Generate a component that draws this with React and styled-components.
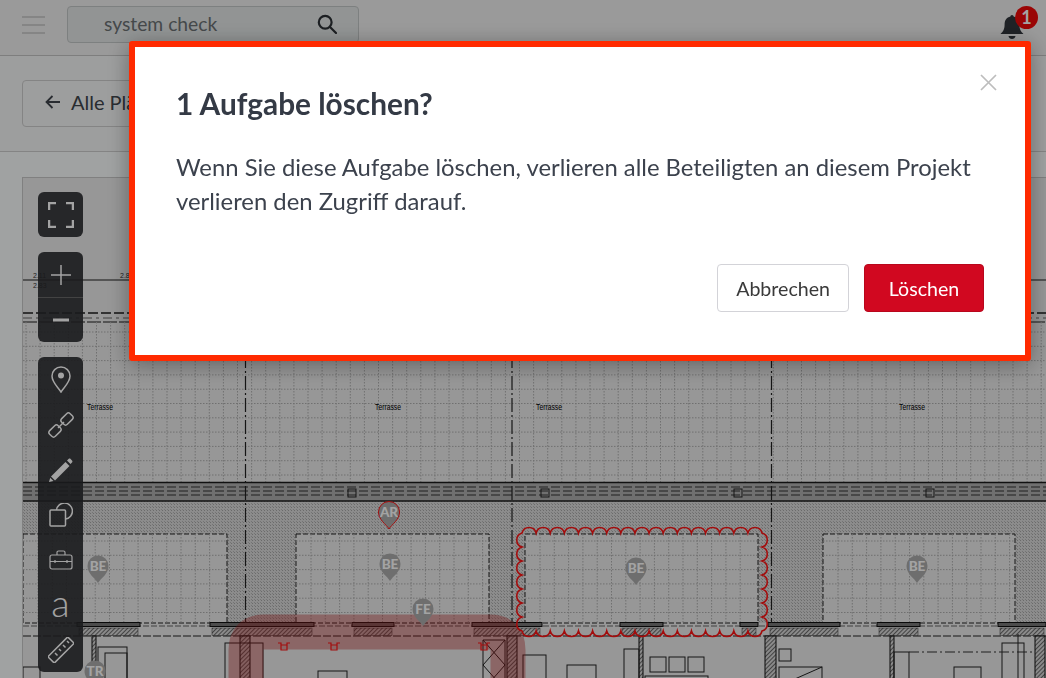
import React from 'react'
import styled, { createGlobalStyle } from 'styled-components'

const GlobalStyle = createGlobalStyle`
  html, body {
    margin: 0;
    padding: 0;
    height: 100%;
    overflow: hidden;
    font-family: 'Lato', 'Noto Sans', sans-serif;
  }

  * {
    box-sizing: border-box;
  }
`

const Page = styled.div`
  display: flex;
  flex-direction: column;
  height: 100vh;
  overflow: hidden;
  background-color: #fafdfd;
`

const Header = styled.header`
  display: flex;
  align-items: center;
  flex: 0 0 56px;
  padding: 0 20px 6px 22px;
  background-color: #f1f1f1;
  border-bottom: 1px solid #c6c6c6;
`

const Burger = styled.div`
  display: flex;
  flex-direction: column;
  justify-content: space-between;
  width: 23px;
  height: 18px;
  margin-right: 22px;

  span {
    display: block;
    height: 2px;
    background-color: #d0d0d0;
  }
`

const SearchBox = styled.div`
  display: flex;
  align-items: center;
  justify-content: space-between;
  width: 292px;
  height: 37px;
  padding: 0 21px 2px 36px;
  background-color: #e4e8e8;
  border: 1px solid #c4c8c8;
  border-radius: 4px;
  color: #6d7275;
  font-size: 19.3px;
`

const Bell = styled.div`
  position: relative;
  display: flex;
  width: 26px;
  height: 28px;
  margin: 6px 0 0 auto;
`

const Badge = styled.span`
  position: absolute;
  top: -8px;
  left: 15px;
  display: flex;
  align-items: center;
  justify-content: center;
  width: 23px;
  height: 23px;
  border-radius: 50%;
  background-color: #f10808;
  color: #ffffff;
  font-size: 18px;
  font-weight: 700;
`

const SubBar = styled.div`
  display: flex;
  align-items: center;
  flex: 0 0 96px;
  padding: 0 22px 1px;
  background-color: #f6f7f7;
  border-bottom: 1px solid #cfcfcf;
`

const BackButton = styled.div`
  display: flex;
  align-items: center;
  gap: 10px;
  height: 47px;
  padding: 0 22px 2px;
  border: 1px solid #cfcfcf;
  border-radius: 4px;
  color: #40464d;
  font-size: 20px;
`

const PlanArea = styled.main`
  display: flex;
  flex: 1;
  min-height: 0;
  padding: 25px 0 0 22px;
`

const PlanFrame = styled.div`
  position: relative;
  flex: 1;
  overflow: hidden;
  background-color: #ececec;
  border-top: 1px solid #c8c8c8;
  border-left: 1px solid #c8c8c8;

  > svg {
    display: block;
  }
`

const ToolColumn = styled.div`
  position: absolute;
  top: 14px;
  left: 15px;
  display: flex;
  flex-direction: column;
  gap: 15px;
`

const ToolGroup = styled.div`
  display: flex;
  flex-direction: column;
  width: 45px;
  overflow: hidden;
  border-radius: 6px;
  background-color: rgba(41, 42, 46, 0.9);
`

const Tool = styled.div`
  display: flex;
  align-items: center;
  justify-content: center;
  height: 45px;
  color: #ffffff;
  border-top: ${props => (props.$divided ? '1px solid #6a6a6a' : '0')};
`

const LetterTool = styled(Tool)`
  font-size: 38px;
  font-weight: 300;
  line-height: 1;
  padding-bottom: 6px;
`

const Backdrop = styled.div`
  position: fixed;
  inset: 0;
  display: flex;
  align-items: flex-start;
  padding: 41px 15px 0 129px;
  background-color: rgba(0, 0, 0, 0.36);
`

const Dialog = styled.div`
  position: relative;
  display: flex;
  flex-direction: column;
  width: 902px;
  height: 320px;
  padding: 40px 41px 0 41px;
  background-color: #ffffff;
  border: 6px solid #ff2a00;
  border-radius: 3px;
  box-shadow: 0 4px 22px rgba(0, 0, 0, 0.35);
`

const CloseButton = styled.div`
  position: absolute;
  top: 27px;
  right: 28px;
  display: flex;
  color: #bdbdbd;
`

const Title = styled.h2`
  margin: 0 0 29px;
  color: #343a45;
  font-size: 29.8px;
  font-weight: 700;
  line-height: 34px;
`

const Message = styled.p`
  margin: 0 0 46px;
  color: #3c424d;
  font-size: 23.85px;
  font-weight: 400;
  line-height: 34px;
`

const Actions = styled.div`
  display: flex;
  justify-content: flex-end;
  gap: 15px;
`

const ActionButton = styled.button`
  min-width: 120px;
  height: 48px;
  padding: 0 18px;
  background-color: ${props => (props.$danger ? '#d10820' : '#ffffff')};
  border: 1px solid ${props => (props.$danger ? '#b8071c' : '#d3d3d8')};
  border-radius: 4px;
  color: ${props => (props.$danger ? '#ffffff' : '#3a3a3a')};
  font-family: inherit;
  font-size: 19.6px;
`

const PLAN_DARK = '#1c1c1c'
const GRID = '#b0b0b0'

const range = (from, to, step) => {
  const values = []
  for (let v = from; v <= to; v += step) values.push(v)
  return values
}

const cloudPath = () => {
  const left = 522
  const top = 533
  const stepX = 14.12
  const stepY = 14
  const arc = (dx, dy) => `a7.3 7.3 0 0 1 ${dx} ${dy}`
  let d = `M${left} ${top}`
  for (let i = 0; i < 17; i++) d += arc(stepX, 0)
  for (let i = 0; i < 7; i++) d += arc(0, stepY)
  for (let i = 0; i < 17; i++) d += arc(-stepX, 0)
  for (let i = 0; i < 7; i++) d += arc(0, -stepY)
  return d + 'z'
}

const ROOMS = [
  [23, 227],
  [296, 489],
  [525, 758],
  [823, 1015],
]

const PARAPETS = [
  [77, 140], [210, 314], [352, 394], [472, 542], [620, 663],
  [740, 758], [768, 840], [877, 920], [998, 1046],
]

const WALLS = [
  [92, 4], [240, 10], [507, 10], [639, 4], [765, 11], [890, 4], [1035, 10],
]

const FURNITURE = [
  [98, 647, 29, 40], [105, 653, 22, 40], [23, 667, 17, 20], [225, 643, 38, 50],
  [318, 671, 29, 20], [523, 655, 23, 30], [567, 665, 29, 20], [624, 649, 15, 40],
  [650, 657, 16, 15], [669, 657, 16, 15], [688, 657, 16, 15], [645, 676, 63, 10],
  [779, 649, 12, 12], [779, 667, 43, 20], [894, 652, 15, 40], [954, 667, 27, 20],
  [1002, 643, 22, 50],
]

const PINS = [
  [98, 568, 'BE'], [390, 566, 'BE'], [636, 570, 'BE'], [917, 568, 'BE'],
  [423, 611, 'FE'], [95, 673, 'TR'], [389, 514, 'AR', true],
]

const LABELS = [100, 388, 549, 912]
const TRAYS = [284, 334, 484]

const Pin = ({ x, y, label, alert }) => (
  <g>
    <path
      d={`M${x} ${y + 15}C${x - 3} ${y + 10} ${x - 10.5} ${y + 6} ${x - 10.5} ${y - 2}A10.5 10.5 0 0 1 ${x + 10.5} ${y - 2}C${x + 10.5} ${y + 6} ${x + 3} ${y + 10} ${x} ${y + 15}z`}
      fill="#adadad"
      stroke={alert ? '#ff1414' : 'none'}
      strokeWidth="1"
    />
    <text x={x} y={y + 3} textAnchor="middle" fontFamily="Lato, sans-serif" fontWeight="900" fontSize="13.5" fill="#ffffff">
      {label}
    </text>
  </g>
)

const PlanDrawing = () => (
  <svg width="1023" height="500" viewBox="23 178 1023 500">
    <defs>
      <pattern id="plan-texture" width="3" height="3" patternUnits="userSpaceOnUse">
        <rect width="3" height="3" fill="#dcdcdc" />
        <rect width="1" height="1" fill="#a8a8a8" />
        <rect x="2" y="2" width="1" height="1" fill="#b8b8b8" />
      </pattern>
      <pattern id="plan-hatch" width="3" height="3" patternUnits="userSpaceOnUse" patternTransform="rotate(45)">
        <rect width="3" height="3" fill="#d8d8d8" />
        <rect width="1" height="3" fill="#6a6a6a" />
      </pattern>
    </defs>

    <path d="M23 280H1046" stroke={PLAN_DARK} strokeWidth="1" />
    <g fontFamily="Liberation Sans, sans-serif" fontSize="7" fill="#333">
      <text x="33" y="278">2.11</text>
      <text x="33" y="288">2.83</text>
      <text x="120" y="278">2.88</text>
      <text x="1016" y="278">2.11</text>
    </g>

    <path d="M23 313H1046" stroke={PLAN_DARK} strokeWidth="1.5" strokeDasharray="10 3" />
    <path d="M23 318H1046" stroke="#666" strokeWidth="1" strokeDasharray="9 4 3 4" />
    <path d="M23 322H1046" stroke={PLAN_DARK} strokeWidth="1" strokeDasharray="14 2" />

    {range(26, 1046, 14.1).map(x => (
      <path key={x} d={`M${x} 322V482`} stroke={GRID} strokeDasharray="1.5 1.5" />
    ))}
    {range(332, 482, 14.3).map(y => (
      <path key={y} d={`M23 ${y}H1046`} stroke={GRID} strokeDasharray="1.5 1.5" />
    ))}

    <rect x="23" y="501" width="1023" height="122" fill="url(#plan-texture)" />
    <rect x="23" y="482" width="1023" height="19" fill="#b0b0b0" />
    <path d="M23 482.5H1046M23 501H1046" stroke={PLAN_DARK} strokeWidth="1.5" />
    <path d="M23 487H1046M23 491H1046M23 495H1046" stroke="#333" strokeDasharray="9 3" />
    {[352, 545, 738, 930].map(x => (
      <rect key={x} x={x - 4} y="489" width="8" height="8" fill="none" stroke="#222" />
    ))}

    {ROOMS.map(([x1, x2]) => (
      <g key={x1}>
        <rect x={x1} y="534" width={x2 - x1} height="89" fill="#ececec" stroke="#222" strokeDasharray="5 2" />
        {range(x1 + 15, x2 - 4, 14.3).map(x => (
          <path key={x} d={`M${x} 534V623`} stroke={GRID} strokeDasharray="1.5 1.5" />
        ))}
        {range(541, 620, 14.3).map(y => (
          <path key={y} d={`M${x1} ${y}H${x2}`} stroke={GRID} strokeDasharray="1.5 1.5" />
        ))}
      </g>
    ))}

    <path d="M23 626H1046" stroke="#666" strokeDasharray="6 2" />
    <path d="M23 636H1046" stroke="#222" strokeDasharray="8 2" />
    {PARAPETS.map(([x1, x2]) => (
      <g key={x1}>
        <rect x={x1} y="622.5" width={x2 - x1} height="4" fill="#777" stroke="#111" />
        <rect x={x1 + 2} y="628" width={x2 - x1 - 4} height="7.5" fill="url(#plan-hatch)" stroke="#333" strokeWidth="0.5" />
      </g>
    ))}

    {WALLS.map(([x, w]) => (
      <rect key={x} x={x} y="636" width={w} height="50" fill="url(#plan-hatch)" stroke="#111" />
    ))}
    {FURNITURE.map(([x, y, w, h]) => (
      <rect key={`${x}-${y}`} x={x} y={y} width={w} height={h} fill="none" stroke="#222" strokeWidth="1" />
    ))}
    <path d="M483 640H505V690H483zM483 640L505 665L483 690M505 640L483 665L505 690" fill="none" stroke="#222" />
    <path d="M779 686L822 667" stroke="#222" />
    <path d="M909 652H1035" stroke="#333" strokeDasharray="10 3 2 3" />
    <path d="M1018 634V678" stroke="#222" />

    {[245.5, 512, 771.5].map(x => (
      <path key={x} d={`M${x} 178V623`} stroke="#222" strokeWidth="1.2" strokeDasharray="14 3 2 3" />
    ))}

    {LABELS.map(x => (
      <text key={x} x={x} y="410" textAnchor="middle" textLength="26" lengthAdjust="spacingAndGlyphs" fontFamily="Liberation Sans, sans-serif" fontSize="9.5" fill="#000">
        Terrasse
      </text>
    ))}

    <path d="M246 700V650Q246 632 264 632H490Q508 632 508 650V700" fill="none" stroke="#b81818" strokeOpacity="0.36" strokeWidth="35" />
    {TRAYS.map(x => (
      <path key={x} d={`M${x - 6} 643H${x - 3}V645H${x + 3}V643H${x + 6}M${x - 3} 645V650H${x + 3}V645`} fill="none" stroke="#ff1414" strokeWidth="1.2" />
    ))}
    <path d={cloudPath()} fill="none" stroke="#ff1414" strokeWidth="1.6" />

    {PINS.map(([x, y, label, alert]) => (
      <Pin key={`${label}-${x}`} x={x} y={y} label={label} alert={alert} />
    ))}
  </svg>
)

const icon = { fill: 'none', stroke: 'currentColor', strokeWidth: 1.5 }

const ExpandIcon = () => (
  <svg width="26" height="26" viewBox="0 0 26 26" {...icon} strokeWidth="2.5">
    <path d="M1 8V1H8M18 1H25V8M25 18V25H18M8 25H1V18" />
  </svg>
)

const PlusIcon = () => (
  <svg width="22" height="22" viewBox="0 0 22 22" {...icon}>
    <path d="M11 1V21M1 11H21" />
  </svg>
)

const MinusIcon = () => (
  <svg width="16" height="4" viewBox="0 0 16 4" {...icon} strokeWidth="3">
    <path d="M0 2H16" />
  </svg>
)

const PinIcon = () => (
  <svg width="20" height="27" viewBox="0 0 20 27" {...icon}>
    <path d="M10 26C7 21 1 16.5 1 10A9 9 0 0 1 19 10C19 16.5 13 21 10 26z" />
    <circle cx="10" cy="9.5" r="3" fill="currentColor" stroke="none" />
  </svg>
)

const LinkIcon = () => (
  <svg width="26" height="26" viewBox="0 0 26 26" {...icon}>
    <rect x="13" y="3" width="12" height="8" rx="2.5" transform="rotate(-45 19 7)" />
    <rect x="1" y="15" width="12" height="8" rx="2.5" transform="rotate(-45 7 19)" />
    <path d="M10 16L16 10" />
  </svg>
)

const PencilIcon = () => (
  <svg width="24" height="24" viewBox="0 0 24 24" fill="currentColor">
    <path d="M16.5 4L20.5 8L6 22.5L2 18.5z" />
    <path d="M18 2.5L19.5 1C20.2.4 21 .4 21.6 1L23 2.4C23.6 3 23.6 3.8 23 4.5L21.5 6z" />
    <path d="M1.2 19.8L4.5 23L0 24z" />
  </svg>
)

const ShapesIcon = () => (
  <svg width="24" height="24" viewBox="0 0 24 24" {...icon}>
    <rect x="1" y="7" width="15.5" height="16" rx="1" />
    <path d="M7.5 7A8 8 0 1 1 16.5 16" />
  </svg>
)

const CaseIcon = () => (
  <svg width="24" height="20" viewBox="0 0 24 20" {...icon} strokeWidth="1.2">
    <rect x="1" y="5" width="22" height="14" rx="2" />
    <path d="M8 5V2.5C8 1.6 8.6 1 9.5 1H14.5C15.4 1 16 1.6 16 2.5V5M1 11.5H23M6 10V13M18 10V13" />
  </svg>
)

const RulerIcon = () => (
  <svg width="26" height="26" viewBox="0 0 26 26" {...icon}>
    <rect x="-1" y="8.5" width="28" height="9" rx="1" transform="rotate(-45 13 13)" />
    <path d="M7 13L9.5 15.5M11 9L13 11M15 5L17.5 7.5M19 1L21 3" transform="translate(0 3)" />
  </svg>
)

const SearchIcon = () => (
  <svg width="20" height="20" viewBox="0 0 20 20" fill="none" stroke="#2d3136" strokeWidth="2.2">
    <circle cx="8.2" cy="8.2" r="6.4" />
    <path d="M13 13L19 19" strokeLinecap="round" />
  </svg>
)

const BellIcon = () => (
  <svg width="24" height="26" viewBox="0 0 24 26" fill="#31363c">
    <path d="M12 1C13 1 13.6 1.8 13.6 2.6C17.4 3.4 19.4 6.5 19.4 10.5C19.4 15.5 21 17.5 23.5 20H.5C3 17.5 4.6 15.5 4.6 10.5C4.6 6.5 6.6 3.4 10.4 2.6C10.4 1.8 11 1 12 1z" />
    <path d="M8.5 22H15.5C15.2 24 13.8 25 12 25S8.8 24 8.5 22z" />
  </svg>
)

const ArrowIcon = () => (
  <svg width="16" height="16" viewBox="0 0 16 16" fill="none" stroke="currentColor" strokeWidth="1.8">
    <path d="M15 8H1.5M7.5 2L1.5 8L7.5 14" />
  </svg>
)

const CloseIcon = () => (
  <svg width="17" height="17" viewBox="0 0 17 17" fill="none" stroke="currentColor" strokeWidth="1.7">
    <path d="M1 1L16 16M16 1L1 16" />
  </svg>
)

const App = () => (
  <>
    <GlobalStyle />
    <Page>
      <Header>
        <Burger>
          <span />
          <span />
          <span />
        </Burger>
        <SearchBox>
          system check
          <SearchIcon />
        </SearchBox>
        <Bell>
          <BellIcon />
          <Badge>1</Badge>
        </Bell>
      </Header>
      <SubBar>
        <BackButton>
          <ArrowIcon />
          Alle Pläne
        </BackButton>
      </SubBar>
      <PlanArea>
        <PlanFrame>
          <PlanDrawing />
          <ToolColumn>
            <ToolGroup>
              <Tool><ExpandIcon /></Tool>
            </ToolGroup>
            <ToolGroup>
              <Tool><PlusIcon /></Tool>
              <Tool $divided><MinusIcon /></Tool>
            </ToolGroup>
            <ToolGroup>
              <Tool><PinIcon /></Tool>
              <Tool><LinkIcon /></Tool>
              <Tool><PencilIcon /></Tool>
              <Tool><ShapesIcon /></Tool>
              <Tool><CaseIcon /></Tool>
              <LetterTool>a</LetterTool>
              <Tool><RulerIcon /></Tool>
            </ToolGroup>
          </ToolColumn>
        </PlanFrame>
      </PlanArea>
      <Backdrop>
        <Dialog>
          <CloseButton><CloseIcon /></CloseButton>
          <Title>1 Aufgabe löschen?</Title>
          <Message>
            Wenn Sie diese Aufgabe löschen, verlieren alle Beteiligten an diesem Projekt verlieren den Zugriff darauf.
          </Message>
          <Actions>
            <ActionButton>Abbrechen</ActionButton>
            <ActionButton $danger>Löschen</ActionButton>
          </Actions>
        </Dialog>
      </Backdrop>
    </Page>
  </>
)

export default App
